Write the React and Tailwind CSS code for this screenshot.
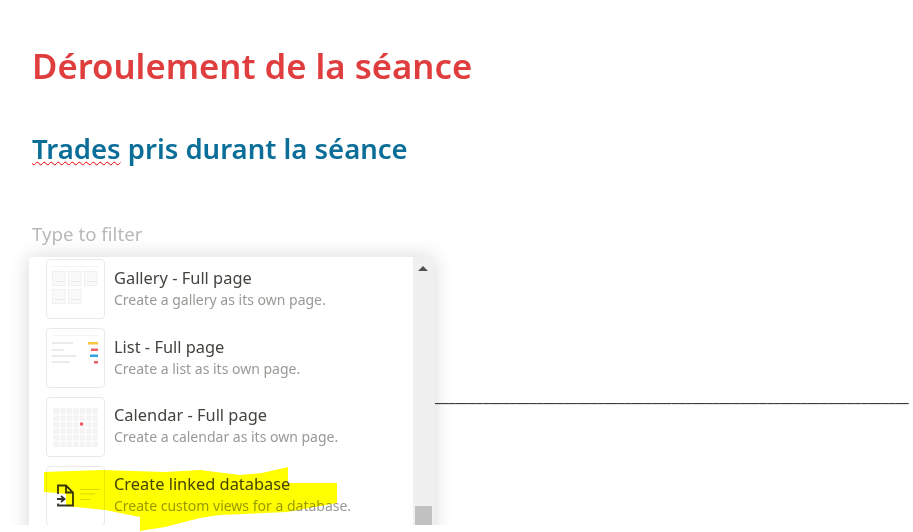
import React from 'react';

function Thumb({ children }) {
  return (
    <div className="w-[59px] h-[60px] shrink-0 bg-white border border-[#e9e9e9] rounded-[4px]">
      <svg width="57" height="58" viewBox="0 0 57 58" fill="none">
        {children}
      </svg>
    </div>
  );
}

function GalleryThumb() {
  const cards = [
    [5, 11],
    [21, 11],
    [37, 11],
    [5, 29],
    [21, 29],
  ];
  return (
    <Thumb>
      <rect x="5" y="6" width="46" height="1" fill="#f4f4f4" />
      {cards.map(([x, y]) => (
        <g key={`${x}-${y}`}>
          <rect x={x + 0.5} y={y + 0.5} width="12.5" height="14" fill="#f9f9f9" stroke="#f0f0f0" />
          <rect x={x + 3} y={y + 10} width="8" height="1" fill="#e8e8e8" />
        </g>
      ))}
    </Thumb>
  );
}

function ListThumb() {
  return (
    <Thumb>
      <rect x="5" y="6" width="46" height="1" fill="#f4f4f4" />
      <rect x="5" y="13" width="21" height="2" fill="#ebebeb" />
      <rect x="41" y="13" width="10" height="2.5" fill="#f5c842" />
      <rect x="5" y="20" width="12" height="2" fill="#ebebeb" />
      <rect x="44" y="19.5" width="7" height="2.5" fill="#f0606a" />
      <rect x="5" y="26" width="24" height="2" fill="#ebebeb" />
      <rect x="43" y="25.5" width="8" height="2.5" fill="#2ea3e0" />
      <rect x="5" y="32" width="18" height="2" fill="#ebebeb" />
      <rect x="47" y="32" width="4" height="2.5" fill="#f0606a" />
    </Thumb>
  );
}

function CalendarThumb() {
  const cols = [0, 1, 2, 3, 4, 5, 6];
  const rows = [0, 1, 2, 3, 4, 5];
  return (
    <Thumb>
      <rect x="6" y="10" width="45" height="39" fill="#f4f4f4" />
      {cols.slice(1).map((c) => (
        <rect key={c} x={6 + c * 6.4} y="10" width="1" height="39" fill="#ffffff" />
      ))}
      {rows.slice(1).map((r) => (
        <rect key={r} x="6" y={10 + r * 6.5} width="45" height="1" fill="#ffffff" />
      ))}
      <circle cx="34.5" cy="26" r="1.7" fill="#f0505a" />
    </Thumb>
  );
}

function LinkedThumb() {
  return (
    <Thumb>
      <path
        d="M11 27 V18.5 H19 L26 25.5 V38.5 H11 V36.5 M19 18.5 V25.5 H26"
        stroke="#37352f"
        strokeWidth="1.8"
      />
      <path d="M10 32 H17 M14 29 L17.5 32 L14 35" stroke="#37352f" strokeWidth="1.8" />
      <rect x="33" y="22" width="20" height="1" fill="#d9d9d9" />
      <rect x="33" y="26.5" width="15" height="1" fill="#d9d9d9" />
      <rect x="33" y="32" width="10" height="1" fill="#d9d9d9" />
    </Thumb>
  );
}

function Row({ thumb, title, desc }) {
  return (
    <div className="flex items-center h-[68.8px] pl-[17px] pr-2 gap-[9px]">
      {thumb}
      <div className="flex flex-col pb-[2px]">
        <div className="text-[16.4px] leading-[22px] text-[#45433e]">{title}</div>
        <div className="text-[14px] leading-[21px] text-[#9a9996]">{desc}</div>
      </div>
    </div>
  );
}

export default function App() {
  return (
    <div className="relative w-[913px] h-[532px] overflow-hidden bg-white font-['Noto_Sans','Open_Sans',sans-serif]">
      <div className="pl-8 pt-[40px]">
        <h1 className="text-[34.7px] leading-[52px] font-semibold text-[#e03e3e]">Déroulement de la séance</h1>
        <h2 className="mt-[37px] text-[27.5px] leading-[40px] font-semibold text-[#0b6e99]">
          <span className="underline decoration-wavy decoration-[#f00000] decoration-1 underline-offset-[2px]">Trades</span> pris durant la séance
        </h2>
        <div className="mt-[52px] text-[18.7px] leading-[26px] text-[#b9b9b7]">Type to filter</div>
        <div className="mt-[138px] ml-[403px] whitespace-nowrap text-[16px] leading-[22px] font-semibold text-[#37352f]">
          {'_'.repeat(70)}
        </div>
      </div>

      {/* menu is cut off at 525, the screenshot ends there */}
      <div className="absolute left-0 top-[217px] w-[500px] h-[308px] overflow-hidden">
        <div className="absolute left-[29px] top-[40px] w-[405px] h-[320px] bg-white rounded-[3px] shadow-[0_0_20px_rgba(0,0,0,0.16)] flex overflow-hidden">
          <div className="w-[384px] shrink-0 -mt-[2px]">
            <Row
              thumb={<GalleryThumb />}
              title="Gallery - Full page"
              desc="Create a gallery as its own page."
            />
            <Row thumb={<ListThumb />} title="List - Full page" desc="Create a list as its own page." />
            <Row
              thumb={<CalendarThumb />}
              title="Calendar - Full page"
              desc="Create a calendar as its own page."
            />
            <Row
              thumb={<LinkedThumb />}
              title="Create linked database"
              desc="Create custom views for a database."
            />
          </div>
          <div className="relative flex-1 bg-[#f0f0f0]">
            <div className="absolute left-[5px] top-[9px] w-0 h-0 border-x-[5px] border-x-transparent border-b-[5px] border-b-[#505050]" />
            <div className="absolute left-[2px] top-[249px] w-[17px] h-[40px] bg-[#c1c1c1]" />
          </div>
        </div>
      </div>

      {/* yellow marker scribble drawn over the screenshot */}
      <svg className="absolute left-0 top-0 mix-blend-multiply pointer-events-none" width="913" height="532">
        <path
          d="M44 472 L102 470 L165 472 L200 470 L240 475 L262 473 L288 467 L288 483 L337 483 L337 503 L287 512 L220 515 L200 518 L165 527 L140 531 L140 517 L105 510 L66 506 L66 494 L57 493 L44 492 Z"
          fill="#ffff00"
        />
      </svg>
    </div>
  );
}
